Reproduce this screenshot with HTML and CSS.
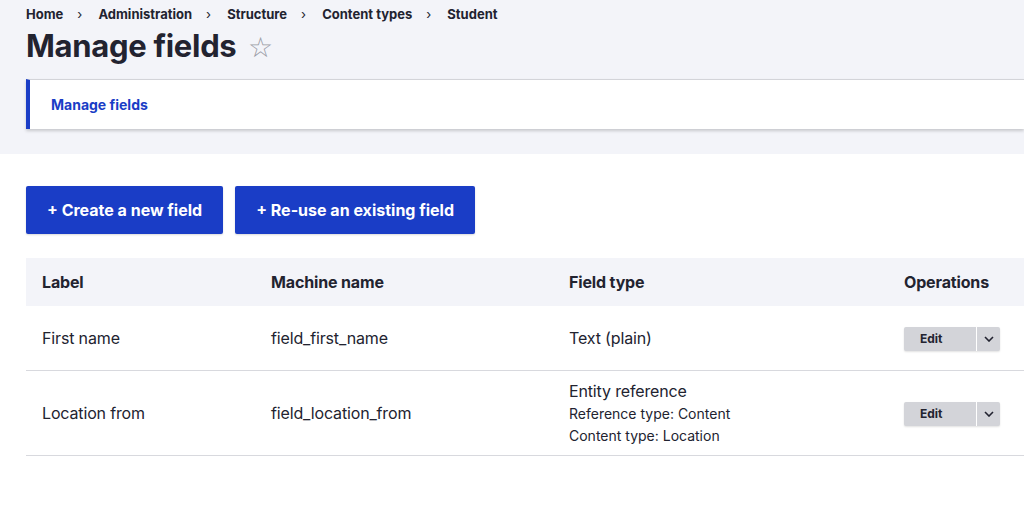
FILE: index.html
```html
<!DOCTYPE html>
<html lang="en">
<head>
<meta charset="utf-8">
<title>Manage fields</title>
<link rel="stylesheet" href="styles.css">
</head>
<body>
<header class="page-header">
  <nav class="breadcrumb">
    <a href="#">Home</a><span class="sep">›</span>
    <a href="#">Administration</a><span class="sep">›</span>
    <a href="#">Structure</a><span class="sep">›</span>
    <a href="#">Content types</a><span class="sep">›</span>
    <a href="#">Student</a>
  </nav>
  <h1 class="title">Manage fields <span class="star">☆</span></h1>
  <div class="tabs">
    <a href="#" class="tab-active">Manage fields</a>
  </div>
</header>
<main class="content">
  <div class="actions">
    <a href="#" class="btn-primary">+ Create a new field</a>
    <a href="#" class="btn-primary">+ Re-use an existing field</a>
  </div>
  <table class="fields">
    <thead>
      <tr>
        <th class="c-label">Label</th>
        <th class="c-machine">Machine name</th>
        <th class="c-type">Field type</th>
        <th class="c-ops">Operations</th>
      </tr>
    </thead>
    <tbody>
      <tr>
        <td>First name</td>
        <td>field_first_name</td>
        <td>Text (plain)</td>
        <td>
          <div class="dropbutton"><a href="#" class="db-main">Edit</a><span class="db-toggle"><svg width="10" height="6" viewBox="0 0 10 6"><path d="M1 1l4 4 4-4" fill="none" stroke="#222330" stroke-width="1.6"/></svg></span></div>
        </td>
      </tr>
      <tr>
        <td>Location from</td>
        <td>field_location_from</td>
        <td>
          <div>Entity reference</div>
          <div class="sub">Reference type: Content</div>
          <div class="sub">Content type: Location</div>
        </td>
        <td>
          <div class="dropbutton"><a href="#" class="db-main">Edit</a><span class="db-toggle"><svg width="10" height="6" viewBox="0 0 10 6"><path d="M1 1l4 4 4-4" fill="none" stroke="#222330" stroke-width="1.6"/></svg></span></div>
        </td>
      </tr>
    </tbody>
  </table>
</main>
</body>
</html>
```
FILE: styles.css
```css
* { box-sizing: border-box; }
body {
  margin: 0;
  font-family: Inter, "Noto Sans", sans-serif;
  color: #222330;
  background: #fff;
}
a { text-decoration: none; color: inherit; }

.page-header {
  background: #f3f4f9;
  padding: 6px 0 25px 26px;
}
.breadcrumb {
  font-size: 13px;
  font-weight: 700;
  line-height: 16px;
  color: #222330;
}
.breadcrumb .sep {
  display: inline-block;
  margin: 0 13px 0 14px;
  font-weight: 400;
  font-size: 13px;
}
.title {
  margin: 4px 0 0;
  font-size: 31px;
  line-height: 40px;
  font-weight: 700;
  letter-spacing: -0.3px;
  color: #222330;
}
.star {
  font-weight: 300;
  color: #9a9ca6;
  font-size: 28px;
  margin-left: 5px;
  font-family: "DejaVu Sans", sans-serif;
}
.tabs {
  margin-top: 11px;
  height: 50px;
  background: #fff;
  border-top: 1px solid #d3d4d9;
  border-left: 4px solid #1a3dc6;
  box-shadow: 0 2px 3px rgba(0,0,0,0.18);
  display: flex;
  align-items: center;
  padding-left: 21px;
}
.tab-active {
  color: #1a3dc6;
  font-weight: 700;
  font-size: 14px;
}

.content {
  padding: 32px 0 0 26px;
}
.actions {
  display: flex;
  gap: 12px;
}
.btn-primary {
  display: flex;
  align-items: center;
  height: 48px;
  padding: 0 21px;
  background: #1a3dc6;
  color: #fff;
  font-weight: 700;
  font-size: 16px;
  border-radius: 2px;
  box-shadow: 0 1px 2px rgba(0,0,0,0.15);
}

.fields {
  margin-top: 24px;
  width: 100%;
  border-collapse: collapse;
  font-size: 16px;
  letter-spacing: -0.15px;
}
.fields th {
  background: #f3f4f9;
  height: 48px;
  text-align: left;
  font-weight: 700;
  padding: 0 16px;
}
.c-label { width: 229px; }
.c-machine { width: 298px; }
.c-type { width: 335px; }
.fields td {
  height: 64px;
  padding: 8px 16px;
  line-height: 24px;
  border-bottom: 1px solid #d8d9de;
  vertical-align: middle;
}
.fields .sub {
  font-size: 14px;
  line-height: 22px;
  letter-spacing: 0;
}

.dropbutton {
  display: inline-flex;
  height: 24px;
  background: #d3d4d9;
  border-radius: 2px;
  box-shadow: 0 1px 2px rgba(0,0,0,0.12);
  letter-spacing: 0;
}
.db-main {
  width: 73px;
  display: flex;
  align-items: center;
  padding-left: 16px;
  font-size: 12px;
  font-weight: 700;
  border-right: 1px solid #fff;
}
.db-toggle {
  width: 23px;
  display: flex;
  align-items: center;
  justify-content: center;
}
```
